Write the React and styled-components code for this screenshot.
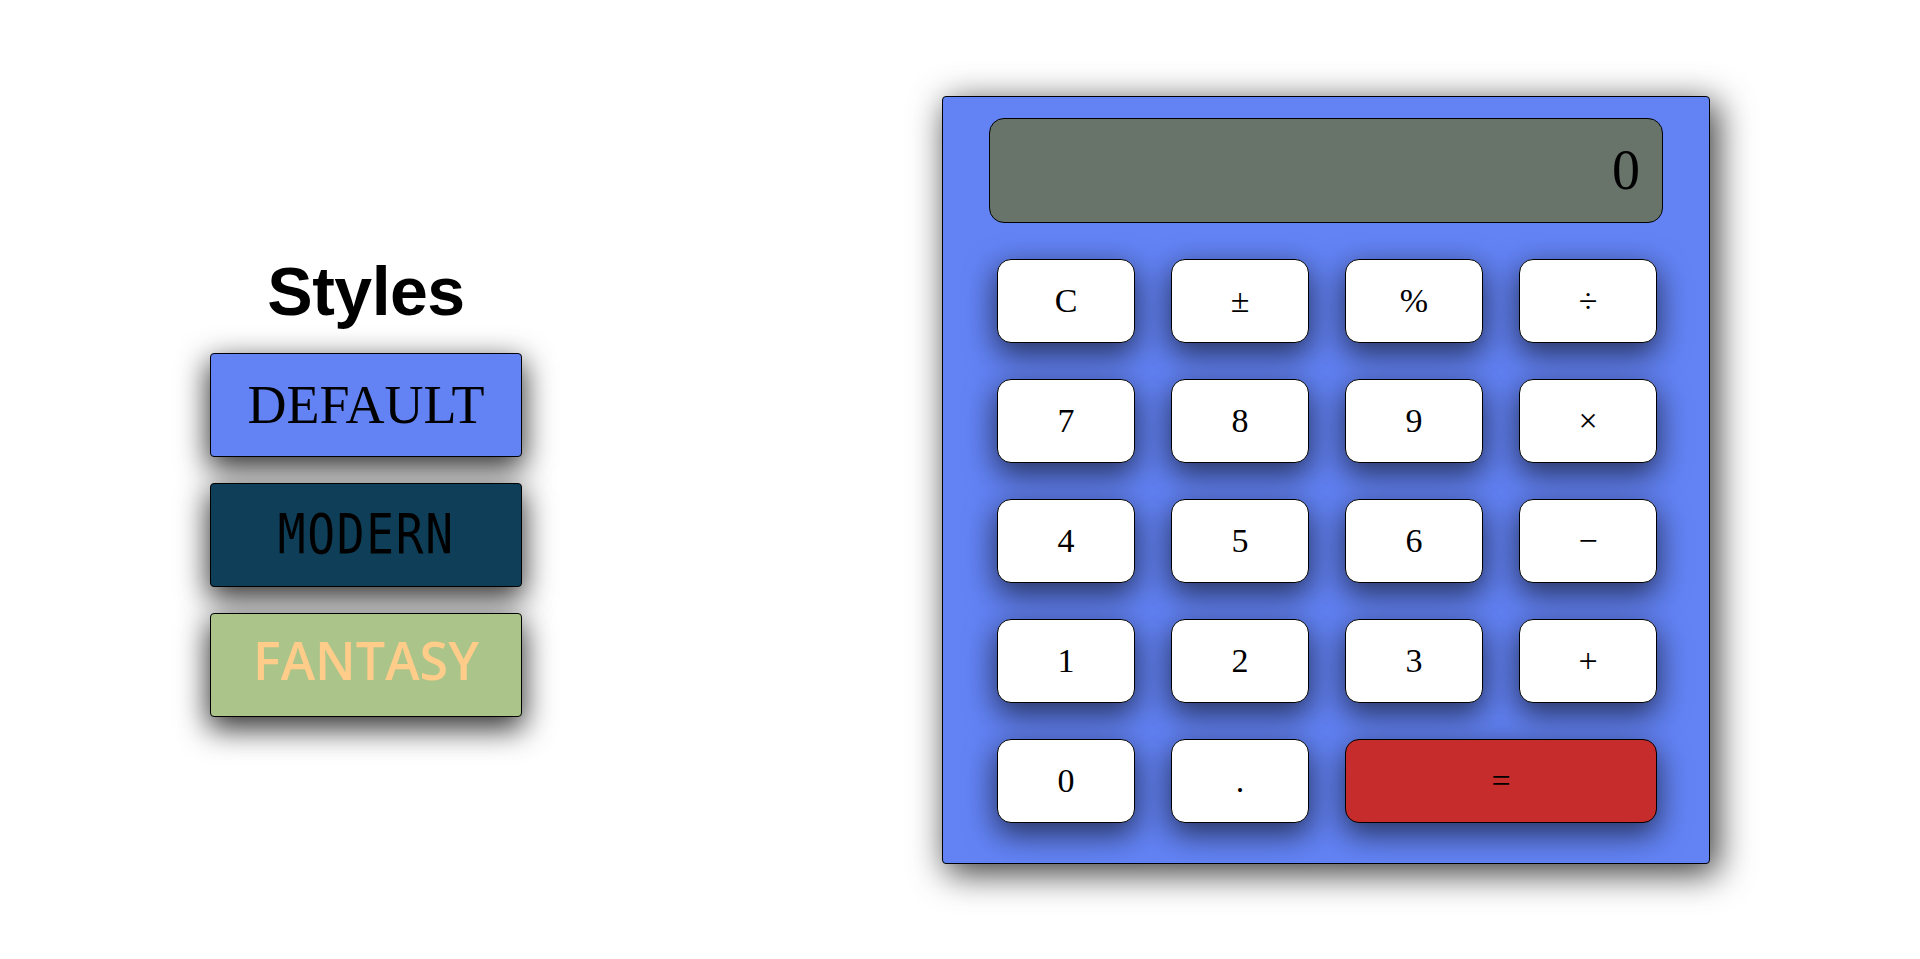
import React, { useState } from "react"
import styled, { createGlobalStyle } from "styled-components"

const GlobalStyle = createGlobalStyle`
  html, body {
    margin: 0;
    padding: 0;
    background: #fff;
  }
  * {
    box-sizing: border-box;
  }
`

const themes = [
  { id: "default", label: "DEFAULT", bg: "#6383f5", color: "#000" },
  { id: "modern", label: "MODERN", bg: "#0f3f58", color: "#000" },
  { id: "fantasy", label: "FANTASY", bg: "#abc48a", color: "#ffcc8a" },
]

const keys = [
  "C", "±", "%", "÷",
  "7", "8", "9", "×",
  "4", "5", "6", "−",
  "1", "2", "3", "+",
  "0", ".", "=",
]

const App = () => {
  const [display] = useState("0")
  return (
    <>
      <GlobalStyle />
      <Page>
        <StylePanel>
          <Heading>Styles</Heading>
          {themes.map(t => (
            <ThemeButton key={t.id} $bg={t.bg} $color={t.color}>
              <ThemeLabel $kind={t.id}>{t.label}</ThemeLabel>
            </ThemeButton>
          ))}
        </StylePanel>
        <Calculator>
          <Display>{display}</Display>
          <Keypad>
            {keys.map(k => (
              <Key key={k} $wide={k === "="}>
                {k}
              </Key>
            ))}
          </Keypad>
        </Calculator>
      </Page>
    </>
  )
}

export default App

const Page = styled.main`
  width: 100%;
  height: 959px;
  display: flex;
  justify-content: space-around;
  align-items: center;
`

const StylePanel = styled.section`
  width: 312px;
  display: flex;
  flex-direction: column;
  align-items: stretch;
  gap: 26px;
  margin-top: 10px;
`

const Heading = styled.h1`
  margin: 0 0 -2px 0;
  text-align: center;
  font-family: "Liberation Sans", Arial, sans-serif;
  font-weight: 700;
  font-size: 68px;
  line-height: 76px;
  letter-spacing: -0.5px;
  color: #000;
`

const ThemeButton = styled.button`
  height: 104px;
  width: 100%;
  display: flex;
  align-items: center;
  justify-content: center;
  background: ${p => p.$bg};
  color: ${p => p.$color};
  border: 1px solid #000;
  border-radius: 4px;
  box-shadow: 0 10px 30px 2px rgba(0, 0, 0, 0.8);
  cursor: pointer;
  padding: 0;
`

const ThemeLabel = styled.span`
  display: inline-block;
  font-family: ${p =>
    p.$kind === "modern"
      ? '"DejaVu Sans Mono", monospace'
      : p.$kind === "fantasy"
      ? '"Open Sans", sans-serif'
      : '"Liberation Serif", "Times New Roman", serif'};
  font-size: ${p => (p.$kind === "modern" ? "55px" : p.$kind === "fantasy" ? "52px" : "54px")};
  font-weight: ${p => (p.$kind === "fantasy" ? 600 : 400)};
  transform: ${p => (p.$kind === "modern" ? "scaleX(0.84)" : "none")};
  letter-spacing: ${p => (p.$kind === "modern" ? "2px" : "0")};
  margin-bottom: ${p => (p.$kind === "fantasy" ? "10px" : "0")};
  line-height: 1;
`

const Calculator = styled.section`
  width: 768px;
  height: 768px;
  background: #6383f5;
  border: 1px solid #000;
  border-radius: 4px;
  padding: 21px 46px 0 46px;
  box-shadow: 6px 8px 34px 2px rgba(0, 0, 0, 0.75);
`

const Display = styled.div`
  height: 105px;
  background: #68736a;
  border: 1px solid #000;
  border-radius: 15px;
  display: flex;
  align-items: center;
  justify-content: flex-end;
  padding-right: 22px;
  font-family: "Liberation Serif", "Times New Roman", serif;
  font-size: 56px;
  color: #000;
`

const Keypad = styled.div`
  margin: 36px 8px 0 8px;
  display: grid;
  grid-template-columns: repeat(4, 138px);
  grid-auto-rows: 84px;
  column-gap: 36px;
  row-gap: 36px;
`

const Key = styled.button`
  grid-column: ${p => (p.$wide ? "span 2" : "auto")};
  background: ${p => (p.$wide ? "#c62c2c" : "#fff")};
  border: 1px solid #000;
  border-radius: 14px;
  box-shadow: 0 10px 30px 2px rgba(0, 0, 0, 0.6);
  font-family: "Liberation Serif", "Times New Roman", serif;
  font-size: 34px;
  color: #000;
  cursor: pointer;
  padding: 0;
`
